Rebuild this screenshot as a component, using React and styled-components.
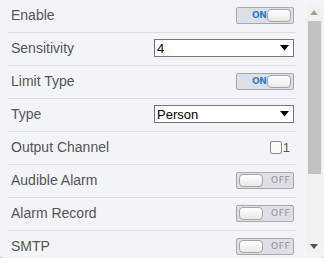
import React from 'react';
import styled, { createGlobalStyle } from 'styled-components';

const GlobalStyle = createGlobalStyle`
  body {
    margin: 0;
    background: #ffffff;
    font-family: "Liberation Sans", Arial, sans-serif;
  }
`;

const Panel = styled.div`
  width: 324px;
  height: 258px;
  background: #f3f4f8;
  display: flex;
  overflow: hidden;
  border-radius: 0 0 4px 4px;
  box-shadow: 0 1px 2px rgba(0, 0, 0, 0.35);
`;

const List = styled.div`
  width: 306px;
  box-sizing: border-box;
  padding: 0 10px 0 8px;
`;

const Row = styled.div`
  height: 33px;
  box-sizing: border-box;
  padding: 0 2px 2px 3px;
  border-bottom: 1px solid #dcdde3;
  display: flex;
  align-items: center;
  justify-content: space-between;
`;

const Label = styled.span`
  font-size: 14px;
  color: #555555;
  margin-bottom: 1px;
`;

const ToggleBox = styled.div`
  width: 58px;
  height: 17px;
  box-sizing: border-box;
  border: 1px solid #a9a9a9;
  border-radius: 2px;
  background: #dcdfe7;
  display: flex;
  align-items: center;
  flex-direction: ${p => (p.$on ? 'row' : 'row-reverse')};
`;

const ToggleText = styled.span`
  font-family: "DejaVu Sans", Verdana, sans-serif;
  font-size: 9px;
  font-weight: ${p => (p.$on ? 'bold' : 'normal')};
  color: ${p => (p.$on ? '#2b7fcf' : '#8f8f8f')};
  letter-spacing: ${p => (p.$on ? '-0.3px' : '0.6px')};
  margin: ${p => (p.$on ? '0 0 0 15px' : '0 auto 0 8px')};
  flex-shrink: 0;
`;

const Knob = styled.div`
  flex-shrink: 0;
  width: 24px;
  height: 13px;
  box-sizing: border-box;
  border: 1px solid #a6a6a6;
  border-radius: 4px;
  background: linear-gradient(#ffffff, #e9e9e9);
  margin: ${p => (p.$on ? '0 3px 0 auto' : '0 0 0 2px')};
`;

const Toggle = ({ on }) => (
  <ToggleBox $on={on}>
    <ToggleText $on={on}>{on ? 'ON' : 'OFF'}</ToggleText>
    <Knob $on={on} />
  </ToggleBox>
);

const SelectBox = styled.div`
  width: 140px;
  height: 18px;
  box-sizing: border-box;
  border: 1px solid #767676;
  background: #ffffff;
  display: flex;
  align-items: center;
  justify-content: space-between;
  padding: 0 4px 0 2px;
  font-size: 13px;
  color: #000000;
`;

const Select = ({ value }) => (
  <SelectBox>
    <span>{value}</span>
    <svg width="9" height="6" viewBox="0 0 9 6">
      <path d="M0 0 H9 L4.5 5.5 Z" fill="#000" />
    </svg>
  </SelectBox>
);

const CheckWrap = styled.label`
  display: flex;
  align-items: center;
  font-size: 13px;
  color: #555555;
  margin-right: 4px;
`;

const CheckSquare = styled.span`
  width: 12px;
  height: 13px;
  box-sizing: border-box;
  border: 1px solid #8a8a8a;
  border-radius: 2px;
  background: #fafafa;
  margin-right: 1px;
`;

const ScrollTrack = styled.div`
  width: 16px;
  margin: 4px 0;
  background: #f1f1f1;
  display: flex;
  flex-direction: column;
`;

const ScrollButton = styled.div`
  height: 16px;
  display: flex;
  align-items: center;
  justify-content: center;
`;

const ScrollThumb = styled.div`
  height: 153px;
  margin: 1px 1px 0 2px;
  background: #c1c1c1;
`;

const ScrollSpace = styled.div`
  flex: 1;
`;

const Arrow = ({ up, color }) => (
  <svg width="8" height="5" viewBox="0 0 8 5">
    <path d={up ? 'M0 5 H8 L4 0 Z' : 'M0 0 H8 L4 5 Z'} fill={color} />
  </svg>
);

const rows = [
  { label: 'Enable', control: <Toggle on /> },
  { label: 'Sensitivity', control: <Select value="4" /> },
  { label: 'Limit Type', control: <Toggle on /> },
  { label: 'Type', control: <Select value="Person" /> },
  {
    label: 'Output Channel',
    control: (
      <CheckWrap>
        <CheckSquare />1
      </CheckWrap>
    ),
  },
  { label: 'Audible Alarm', control: <Toggle /> },
  { label: 'Alarm Record', control: <Toggle /> },
  { label: 'SMTP', control: <Toggle /> },
];

export default function App() {
  return (
    <>
      <GlobalStyle />
      <Panel>
        <List>
          {rows.map(r => (
            <Row key={r.label}>
              <Label>{r.label}</Label>
              {r.control}
            </Row>
          ))}
        </List>
        <ScrollTrack>
          <ScrollButton>
            <Arrow up color="#a3a3a3" />
          </ScrollButton>
          <ScrollThumb />
          <ScrollSpace />
          <ScrollButton>
            <Arrow color="#505050" />
          </ScrollButton>
        </ScrollTrack>
      </Panel>
    </>
  );
}
